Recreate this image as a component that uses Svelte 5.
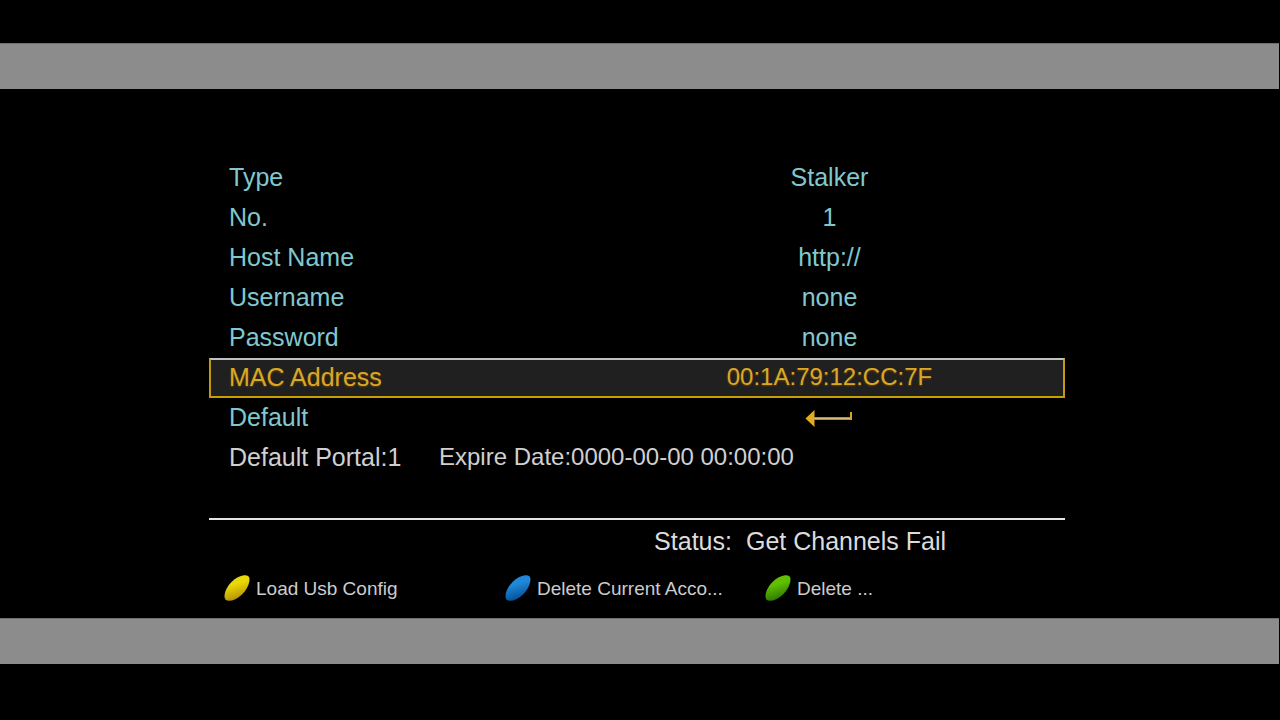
<script lang="ts">
  let fields = $state([
    { id: "number", label: "No.", value: "1" },
    { id: "host", label: "Host Name", value: "http://" },
    { id: "username", label: "Username", value: "none" },
    { id: "password", label: "Password", value: "none" },
    { id: "mac", label: "MAC Address", value: "00:1A:79:12:CC:7F" },
  ]);

  let type = $state("Stalker");
  let selected = $state("mac");

  const actions = [
    { label: "Load Usb Config", color: "yellow" },
    { label: "Delete Current Acco...", color: "blue" },
    { label: "Delete ...", color: "green" },
  ];
</script>

<div class="screen">
  <div class="bar"></div>

  <main>
    <form>
      <div class="row" class:selected={selected === "type"}>
        <label for="type">Type</label>
        <select id="type" bind:value={type} onfocus={() => (selected = "type")}>
          <option>Stalker</option>
        </select>
      </div>

      {#each fields as field (field.id)}
        <div class="row" class:selected={selected === field.id}>
          <label for={field.id}>{field.label}</label>
          <input
            id={field.id}
            class:mac={field.id === "mac"}
            type="text"
            autocomplete="off"
            bind:value={field.value}
            onfocus={() => (selected = field.id)}
          />
        </div>
      {/each}

      <div class="row" class:selected={selected === "default"}>
        <label for="default">Default</label>
        <button
          id="default"
          class="enter"
          type="button"
          onfocus={() => (selected = "default")}
        >
          <svg width="48" height="20" viewBox="0 0 48 20" aria-hidden="true">
            <path d="M0.5 11.500 9.500 3v17z" fill="#e0ac20" />
            <path d="M9 11.500h38" stroke="#b98e2c" stroke-width="3" />
            <path d="M9 11.500h37" stroke="#d8bd72" stroke-width="1" />
            <path d="M46 5v8" stroke="#d5a31e" stroke-width="2" />
          </svg>
        </button>
      </div>
    </form>

    <div class="row info">
      <span class="portal">Default Portal:1</span>
      <span class="expire">Expire Date:0000-00-00 00:00:00</span>
    </div>

    <div class="status">
      <span>Status:</span>
      <span>Get Channels Fail</span>
    </div>

    <footer>
      {#each actions as action (action.color)}
        <button type="button">
          <svg width="26" height="26" viewBox="0 0 26 26" aria-hidden="true">
            <defs>
              <linearGradient id="key-{action.color}" x1="0.3" y1="0" x2="0.6" y2="1">
                <stop class="{action.color} light" offset="0.35" />
                <stop class="{action.color} dark" offset="1" />
              </linearGradient>
            </defs>
            <path
              d="M20 0.3C23.500 0 25.500 1.200 25.500 4C25.500 9 22.500 15 18 19.500C13.500 23.800 9 25.800 5 25.800C2 25.800 0.500 24.200 0.500 21.500C0.500 17 3 11.500 7.500 7C11.500 3 16 0.700 20 0.300Z"
              fill="url(#key-{action.color})"
            />
          </svg>
          <span>{action.label}</span>
        </button>
      {/each}
    </footer>
  </main>

  <div class="bar"></div>
</div>

<style>
  :global(body) {
    background: #000;
  }

  .screen {
    box-sizing: border-box;
    min-height: 100vh;
    padding: 43px 1px 43px 0;
    background: #000;
    color: #d0d0d0;
    font-family: "Liberation Sans", Arial, sans-serif;
    font-size: 25px;
  }

  .bar {
    box-sizing: border-box;
    height: 46px;
    background: #8c8c8c;
    border-top: 1px solid #707070;
  }

  main {
    padding: 69px 214px 12px 209px;
  }

  form {
    color: #80c8d0;
  }

  .row {
    box-sizing: border-box;
    display: flex;
    align-items: center;
    height: 40px;
    padding: 0 0 2px 18px;
    border: 2px solid transparent;
  }

  .row label {
    flex: 1;
  }

  .row input,
  .row select,
  .enter {
    box-sizing: border-box;
    flex: 0 0 56%;
    min-width: 0;
    height: 34px;
    margin: 0;
    padding: 0;
    border: none;
    outline: none;
    background: transparent;
    color: inherit;
    font: inherit;
    text-align: center;
  }

  .row select {
    appearance: none;
    text-align-last: center;
  }

  .row input.mac {
    font-size: 24px;
  }

  .row.selected {
    background: #202020;
    border-color: #c0c0c0 #c09a10 #c8a000;
    color: #d8a828;
    text-shadow: 0 1px 2px #6a4000;
  }

  .row.selected input {
    text-shadow: inherit;
  }

  .enter {
    display: flex;
    align-items: center;
    justify-content: center;
  }

  .info .portal {
    flex: 0 0 210px;
  }

  .info .expire {
    font-size: 24px;
    white-space: nowrap;
  }

  .status {
    display: flex;
    align-items: center;
    gap: 14px;
    height: 42px;
    margin-top: 40px;
    padding-left: 52%;
    border-top: 2px solid #e4e4e4;
    color: #dcdcdc;
    white-space: nowrap;
  }

  footer {
    display: grid;
    grid-template-columns: 281fr 260fr 300fr;
    padding: 10px 0 2px 15px;
  }

  footer button {
    display: flex;
    align-items: center;
    gap: 6px;
    height: 32px;
    padding: 0;
    border: none;
    background: none;
    color: #cccccc;
    font-family: inherit;
    font-size: 19px;
    white-space: nowrap;
  }

  footer button span {
    padding-top: 2px;
  }

  .yellow.light {
    stop-color: #e8d808;
  }

  .yellow.dark {
    stop-color: #b08800;
  }

  .blue.light {
    stop-color: #2088d8;
  }

  .blue.dark {
    stop-color: #004890;
  }

  .green.light {
    stop-color: #60c000;
  }

  .green.dark {
    stop-color: #287000;
  }
</style>
